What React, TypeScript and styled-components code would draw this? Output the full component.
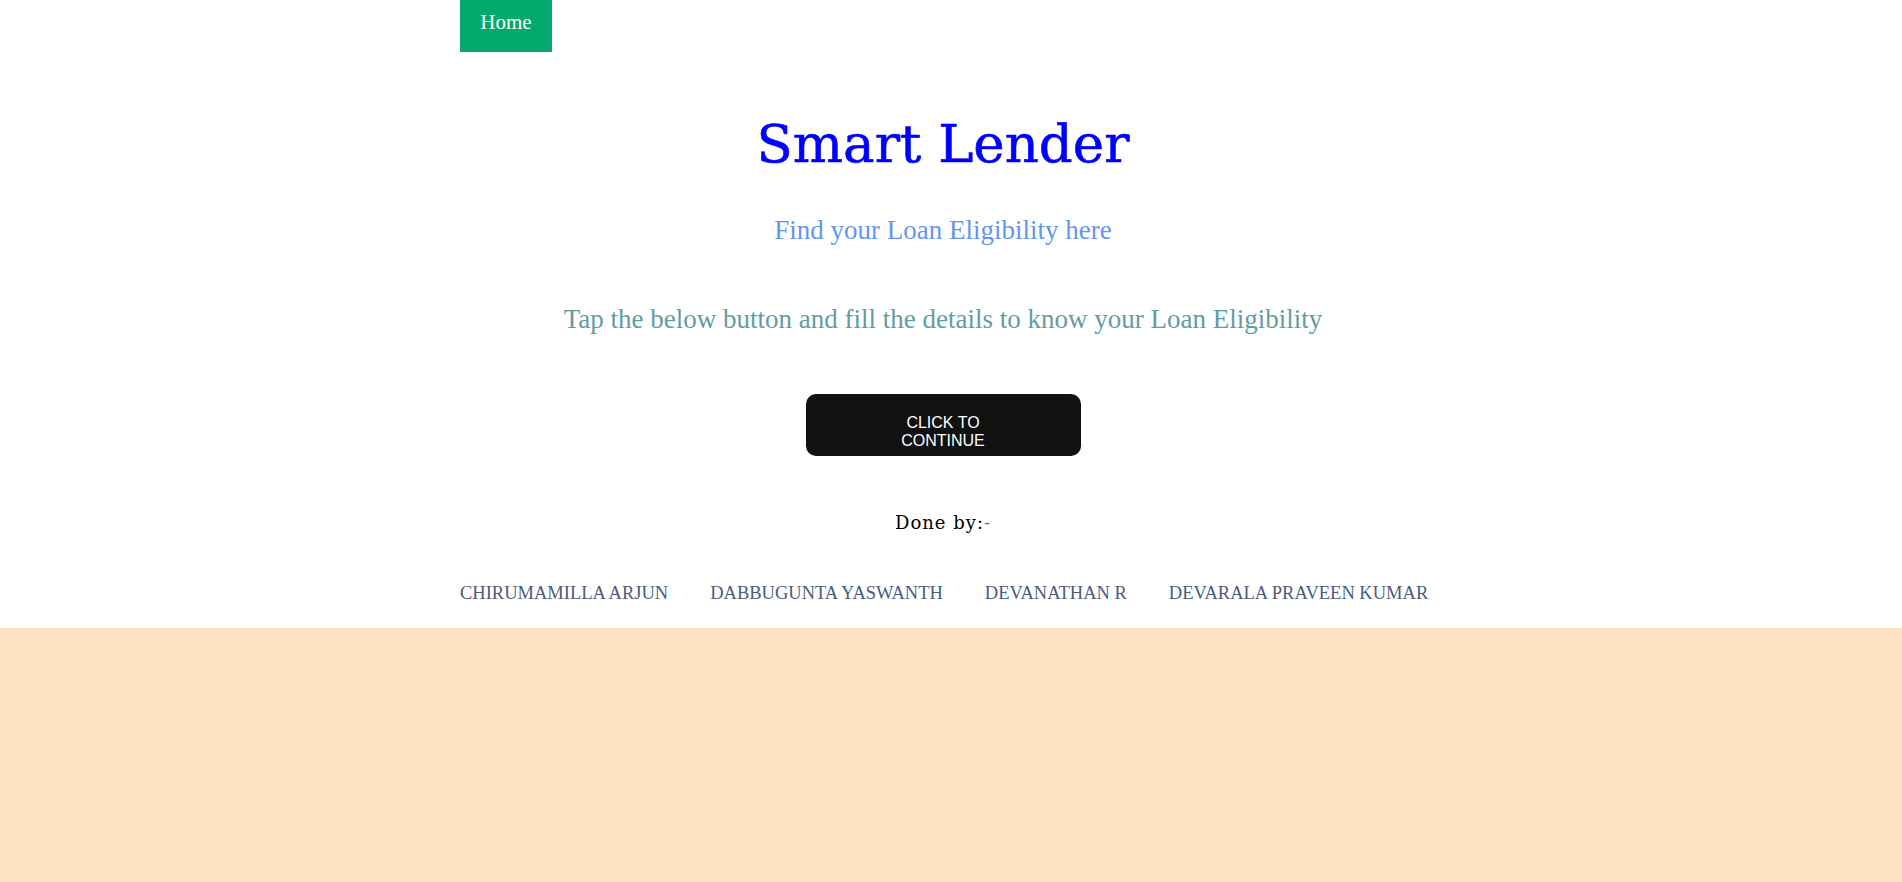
import React from "react";
import styled, { createGlobalStyle } from "styled-components";

const GlobalStyle = createGlobalStyle`
  html, body {
    margin: 0;
    padding: 0;
    background: #fde3c4;
  }
  body {
    font-family: "Liberation Serif", "Times New Roman", serif;
  }
`;

const Page = styled.div`
  background: #ffffff;
  padding-bottom: 25px;
`;

const Container = styled.div`
  width: 966px;
  margin-left: calc((100% - 982px) / 2);
  display: flex;
  flex-direction: column;
  align-items: center;
`;

const NavBar = styled.nav`
  align-self: stretch;
  display: flex;
  height: 52px;
`;

const NavLink = styled.a`
  display: flex;
  align-items: center;
  justify-content: center;
  box-sizing: border-box;
  width: 92px;
  padding: 0 20px 7px;
  background: #04aa6d;
  color: #ffffff;
  font-family: "Liberation Serif", "Times New Roman", serif;
  font-size: 21px;
  text-decoration: none;
`;

const Title = styled.h1`
  margin: 65px 0 0;
  font-family: "DejaVu Serif", serif;
  font-weight: normal;
  font-size: 53px;
  line-height: 1;
  color: #0000ff;
  -webkit-text-stroke: 0.6px #0000ff;
`;

const Line = styled.p<{ $color: string; $gap: number }>`
  margin: ${(p) => p.$gap}px 0 0;
  font-family: "Liberation Serif", "Times New Roman", serif;
  font-size: 27px;
  line-height: 1;
  color: ${(p) => p.$color};
`;

const ContinueButton = styled.button`
  margin-top: 61px;
  width: 275px;
  height: 62px;
  box-sizing: border-box;
  padding: 20px 70px 6px;
  border: none;
  border-radius: 10px;
  background: #111111;
  color: #ffffff;
  font-family: "Liberation Sans", Arial, sans-serif;
  font-size: 16px;
  line-height: 18px;
  cursor: pointer;
`;

const DoneBy = styled.p`
  margin: 58px 0 0;
  font-family: "DejaVu Serif", serif;
  font-size: 18px;
  line-height: 1;
  letter-spacing: 1px;
  color: #000000;
`;

const Dash = styled.span`
  color: #777777;
`;

const Names = styled.ul`
  align-self: stretch;
  list-style: none;
  margin: 52px 0 0;
  padding: 0;
  display: flex;
  gap: 42px;
`;

const Name = styled.li`
  font-family: "Liberation Serif", "Times New Roman", serif;
  font-size: 18.5px;
  line-height: 19px;
  color: #4b5b7c;
  white-space: nowrap;
`;

const members = [
  "CHIRUMAMILLA ARJUN",
  "DABBUGUNTA YASWANTH",
  "DEVANATHAN R",
  "DEVARALA PRAVEEN KUMAR",
];

export default function App() {
  return (
    <>
      <GlobalStyle />
      <Page>
        <Container>
          <NavBar>
            <NavLink href="#">Home</NavLink>
          </NavBar>
          <Title>Smart Lender</Title>
          <Line $color="#6495ed" $gap={47}>
            Find your Loan Eligibility here
          </Line>
          <Line $color="#5f9ea0" $gap={62}>
            Tap the below button and fill the details to know your Loan Eligibility
          </Line>
          <ContinueButton>CLICK TO CONTINUE</ContinueButton>
          <DoneBy>
            Done by:<Dash>-</Dash>
          </DoneBy>
          <Names>
            {members.map((m) => (
              <Name key={m}>{m}</Name>
            ))}
          </Names>
        </Container>
      </Page>
    </>
  );
}
